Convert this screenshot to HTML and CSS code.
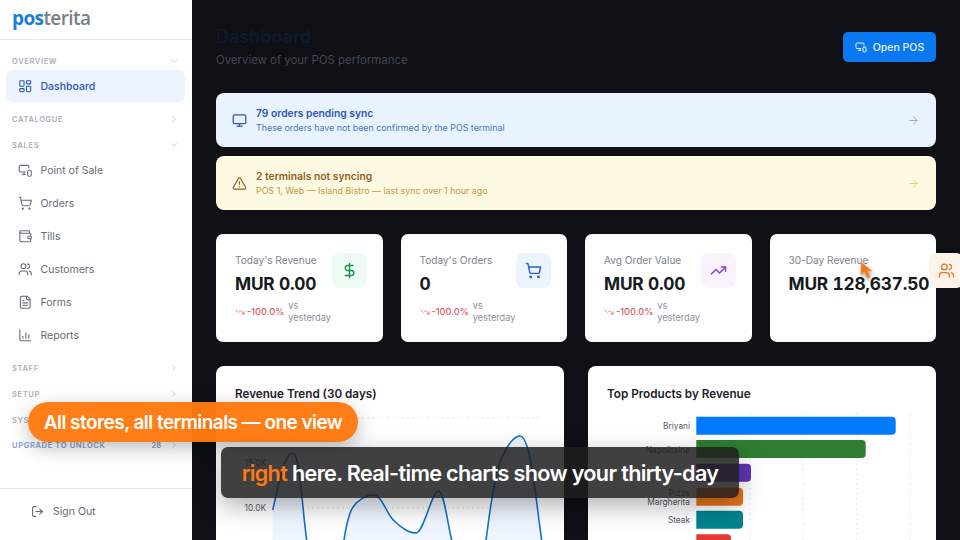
FILE: index.html
```html
<!DOCTYPE html>
<html lang="en">
<head>
  <meta charset="UTF-8">
  <title>Posterita Dashboard</title>
  <meta name="viewport" content="width=device-width,initial-scale=1">
  <link rel="stylesheet" href="styles.css">
</head>
<body>
  <svg class="sprite" width="0" height="0">
    <symbol id="i-dash" viewBox="0 0 24 24"><rect x="3" y="3" width="7" height="9" rx="1"/><rect x="14" y="3" width="7" height="5" rx="1"/><rect x="14" y="12" width="7" height="9" rx="1"/><rect x="3" y="16" width="7" height="5" rx="1"/></symbol>
    <symbol id="i-pos" viewBox="0 0 24 24"><path d="M18 8V6a2 2 0 0 0-2-2H4a2 2 0 0 0-2 2v7a2 2 0 0 0 2 2h8"/><path d="M10 19v-3.96 3.15"/><path d="M7 19h5"/><rect x="16" y="12" width="6" height="10" rx="2"/></symbol>
    <symbol id="i-cart" viewBox="0 0 24 24"><circle cx="8" cy="21" r="1"/><circle cx="19" cy="21" r="1"/><path d="M2.05 2.05h2l2.66 12.42a2 2 0 0 0 2 1.58h9.78a2 2 0 0 0 1.95-1.57l1.65-7.43H5.12"/></symbol>
    <symbol id="i-wallet" viewBox="0 0 24 24"><path d="M19 7V4a1 1 0 0 0-1-1H5a2 2 0 0 0 0 4h15a1 1 0 0 1 1 1v4h-3a2 2 0 0 0 0 4h3a1 1 0 0 0 1-1v-2a1 1 0 0 0-1-1"/><path d="M3 5v14a2 2 0 0 0 2 2h15a1 1 0 0 0 1-1v-4"/></symbol>
    <symbol id="i-users" viewBox="0 0 24 24"><path d="M16 21v-2a4 4 0 0 0-4-4H6a4 4 0 0 0-4 4v2"/><circle cx="9" cy="7" r="4"/><path d="M22 21v-2a4 4 0 0 0-3-3.87"/><path d="M16 3.13a4 4 0 0 1 0 7.75"/></symbol>
    <symbol id="i-file" viewBox="0 0 24 24"><path d="M15 2H6a2 2 0 0 0-2 2v16a2 2 0 0 0 2 2h12a2 2 0 0 0 2-2V7Z"/><path d="M14 2v4a2 2 0 0 0 2 2h4"/><path d="M10 9H8"/><path d="M16 13H8"/><path d="M16 17H8"/></symbol>
    <symbol id="i-chart" viewBox="0 0 24 24"><path d="M3 3v16a2 2 0 0 0 2 2h16"/><path d="M8 17v-3"/><path d="M13 17V8"/><path d="M18 17v-6"/></symbol>
    <symbol id="i-logout" viewBox="0 0 24 24"><path d="M9 21H5a2 2 0 0 1-2-2V5a2 2 0 0 1 2-2h4"/><path d="m16 17 5-5-5-5"/><path d="M21 12H9"/></symbol>
    <symbol id="i-monitor" viewBox="0 0 24 24"><rect x="2" y="3" width="20" height="14" rx="2"/><path d="M8 21h8"/><path d="M12 17v4"/></symbol>
    <symbol id="i-alert" viewBox="0 0 24 24"><path d="m21.73 18-8-14a2 2 0 0 0-3.48 0l-8 14A2 2 0 0 0 4 21h16a2 2 0 0 0 1.73-3"/><path d="M12 9v4"/><path d="M12 17h.01"/></symbol>
    <symbol id="i-arrow" viewBox="0 0 24 24"><path d="M5 12h14"/><path d="m12 5 7 7-7 7"/></symbol>
    <symbol id="i-dollar" viewBox="0 0 24 24"><path d="M12 2v20"/><path d="M17 5H9.5a3.5 3.5 0 0 0 0 7h5a3.5 3.5 0 0 1 0 7H6"/></symbol>
    <symbol id="i-up" viewBox="0 0 24 24"><path d="M22 7 13.5 15.5 8.5 10.5 2 17"/><path d="M16 7h6v6"/></symbol>
    <symbol id="i-down" viewBox="0 0 24 24"><path d="M22 17 13.5 8.5 8.5 13.5 2 7"/><path d="M16 17h6v-6"/></symbol>
    <symbol id="i-open" viewBox="0 0 24 24"><path d="m6 9 6 6 6-6"/></symbol>
    <symbol id="i-closed" viewBox="0 0 24 24"><path d="m9 18 6-6-6-6"/></symbol>
  </svg>

  <div class="page">
    <aside class="sidebar">
      <div class="logo"><span class="logo-pos">pos</span><span class="logo-rest">terita</span></div>
      <nav class="nav">
        <div class="nav-head"><span>OVERVIEW</span><svg class="chev"><use href="#i-open"/></svg></div>
        <a class="nav-item active"><svg class="ico"><use href="#i-dash"/></svg>Dashboard</a>
        <div class="nav-head gap"><span>CATALOGUE</span><svg class="chev"><use href="#i-closed"/></svg></div>
        <div class="nav-head gap"><span>SALES</span><svg class="chev"><use href="#i-open"/></svg></div>
        <a class="nav-item"><svg class="ico"><use href="#i-pos"/></svg>Point of Sale</a>
        <a class="nav-item"><svg class="ico"><use href="#i-cart"/></svg>Orders</a>
        <a class="nav-item"><svg class="ico"><use href="#i-wallet"/></svg>Tills</a>
        <a class="nav-item"><svg class="ico"><use href="#i-users"/></svg>Customers</a>
        <a class="nav-item"><svg class="ico"><use href="#i-file"/></svg>Forms</a>
        <a class="nav-item"><svg class="ico"><use href="#i-chart"/></svg>Reports</a>
        <div class="nav-head gap"><span>STAFF</span><svg class="chev"><use href="#i-closed"/></svg></div>
        <div class="nav-head gap"><span>SETUP</span><svg class="chev"><use href="#i-closed"/></svg></div>
        <div class="nav-head gap"><span>SYSTEM</span><svg class="chev"><use href="#i-closed"/></svg></div>
        <div class="nav-head gap upgrade"><span>UPGRADE TO UNLOCK</span><b class="count">28</b><svg class="chev"><use href="#i-closed"/></svg></div>
      </nav>
      <div class="side-foot"><svg class="ico"><use href="#i-logout"/></svg>Sign Out</div>
    </aside>

    <main class="main">
      <header class="top">
        <div>
          <h1>Dashboard</h1>
          <p>Overview of your POS performance</p>
        </div>
        <button class="open-pos"><svg class="ico"><use href="#i-pos"/></svg>Open POS</button>
      </header>

      <div class="banner blue">
        <svg class="ico"><use href="#i-monitor"/></svg>
        <div class="banner-text">
          <strong>79 orders pending sync</strong>
          <span>These orders have not been confirmed by the POS terminal</span>
        </div>
        <svg class="ico arrow"><use href="#i-arrow"/></svg>
      </div>
      <div class="banner yellow">
        <svg class="ico"><use href="#i-alert"/></svg>
        <div class="banner-text">
          <strong>2 terminals not syncing</strong>
          <span>POS 1, Web — Island Bistro — last sync over 1 hour ago</span>
        </div>
        <svg class="ico arrow"><use href="#i-arrow"/></svg>
      </div>

      <section class="stats">
        <div class="stat">
          <div class="stat-text">
            <div class="stat-label">Today's Revenue</div>
            <div class="stat-value">MUR 0.00</div>
            <div class="trend"><svg class="ico"><use href="#i-down"/></svg><b>-100.0%</b><span>vs yesterday</span></div>
          </div>
          <div class="stat-icon green"><svg class="ico"><use href="#i-dollar"/></svg></div>
        </div>
        <div class="stat">
          <div class="stat-text">
            <div class="stat-label">Today's Orders</div>
            <div class="stat-value">0</div>
            <div class="trend"><svg class="ico"><use href="#i-down"/></svg><b>-100.0%</b><span>vs yesterday</span></div>
          </div>
          <div class="stat-icon sky"><svg class="ico"><use href="#i-cart"/></svg></div>
        </div>
        <div class="stat">
          <div class="stat-text">
            <div class="stat-label">Avg Order Value</div>
            <div class="stat-value">MUR 0.00</div>
            <div class="trend"><svg class="ico"><use href="#i-down"/></svg><b>-100.0%</b><span>vs yesterday</span></div>
          </div>
          <div class="stat-icon violet"><svg class="ico"><use href="#i-up"/></svg></div>
        </div>
        <div class="stat">
          <div class="stat-text">
            <div class="stat-label">30-Day Revenue</div>
            <div class="stat-value">MUR 128,637.50</div>
          </div>
          <div class="stat-icon peach"><svg class="ico"><use href="#i-users"/></svg></div>
        </div>
      </section>

      <section class="charts">
        <div class="chart-card">
          <h3>Revenue Trend (30 days)</h3>
          <svg class="plot" viewBox="0 0 348 160">
            <g class="grid">
              <path d="M56 15H324"/><path d="M56 60H324"/><path d="M56 105H324"/>
            </g>
            <g class="axis">
              <text x="50" y="63">15.0K</text>
              <text x="50" y="108">10.0K</text>
            </g>
            <path class="area" d="M56.7 107C62 85 68 50 76.7 50C84 50 86 105 90.7 137C94 165 118 190 128 137C131 118 134 108 137.3 103.7C142 97 150 92 157.3 92C166 92 170 110 177.3 117C184 124 194 131 200.7 129.7C208 128 216 88 222.3 88C228 88 231 118 235.7 137C241 165 262 185 270 137C273 115 276 90 280.7 70C286 50 296 33 304 33C315 33 320 100 325.7 137L328 160H56.7Z"/>
            <path class="line" d="M56.7 107C62 85 68 50 76.7 50C84 50 86 105 90.7 137C94 165 118 190 128 137C131 118 134 108 137.3 103.7C142 97 150 92 157.3 92C166 92 170 110 177.3 117C184 124 194 131 200.7 129.7C208 128 216 88 222.3 88C228 88 231 118 235.7 137C241 165 262 185 270 137C273 115 276 90 280.7 70C286 50 296 33 304 33C315 33 320 100 325.7 137L328 160"/>
          </svg>
        </div>
        <div class="chart-card">
          <h3>Top Products by Revenue</h3>
          <svg class="plot" viewBox="0 0 348 160">
            <g class="grid">
              <path d="M162 10V160"/><path d="M215 10V160"/><path d="M268.700 10V160"/><path d="M322 10V160"/>
            </g>
            <path fill="#007aff" d="M108.300 13.700H303.700a4 4 0 0 1 4 4V27.700a4 4 0 0 1-4 4H108.300Z"/>
            <path fill="#2e7d32" d="M108.300 37H273.700a4 4 0 0 1 4 4V51a4 4 0 0 1-4 4H108.300Z"/>
            <path fill="#5e35b1" d="M108.300 60.700H159a4 4 0 0 1 4 4V74.700a4 4 0 0 1-4 4H108.300Z"/>
            <path fill="#e8741a" d="M108.300 84.700H151a4 4 0 0 1 4 4V98.700a4 4 0 0 1-4 4H108.300Z"/>
            <path fill="#00838f" d="M108.300 107.700H151a4 4 0 0 1 4 4V121.700a4 4 0 0 1-4 4H108.300Z"/>
            <path fill="#e53935" d="M108.300 131.300H139a4 4 0 0 1 4 4V160H108.300Z"/>
            <g class="axis">
              <text x="102" y="26">Briyani</text>
              <text x="102" y="49.500">Napolitaine</text>
              <text x="102" y="93">Pizza</text>
              <text x="102" y="101.500">Margherita</text>
              <text x="102" y="120">Steak</text>
            </g>
          </svg>
        </div>
      </section>
    </main>

    <!-- video overlays -->
    <div class="pill">All stores, all terminals — one view</div>
    <div class="caption"><em>right</em> here. Real-time charts show your thirty-day</div>
    <svg class="cursor" viewBox="0 0 14 20" width="14" height="20"><path d="M1 1 L1 14 L4.500 11 L7.500 17.500 L10 16 L7.500 10 L12 10 Z"/></svg>
  </div>
</body>
</html>
```

FILE: styles.css
```css
* { box-sizing: border-box; }
html, body { margin: 0; padding: 0; width: 960px; height: 540px; overflow: hidden; }
body { font-family: Inter, "Noto Sans", sans-serif; background: #0e1015; }
.sprite { position: absolute; }
.ico { width: 15px; height: 15px; fill: none; stroke: currentColor; stroke-width: 2; stroke-linecap: round; stroke-linejoin: round; flex: none; }

.page { position: relative; display: flex; width: 960px; height: 540px; overflow: hidden; }

/* sidebar */
.sidebar { width: 192px; height: 540px; background: #fefefe; display: flex; flex-direction: column; flex: none; }
.logo { height: 40px; padding: 2px 0 0 12px; border-bottom: 1px solid #e6e8ec; font-family: "Open Sans", sans-serif; font-size: 19px; line-height: 33px; letter-spacing: -.6px; }
.logo-pos { color: #1a7fd6; font-weight: 700; }
.logo-rest { color: #7a8088; font-weight: 600; }
.nav { padding-top: 12px; flex: 1; }
.nav-head { height: 18px; padding: 0 12px; display: flex; align-items: center; justify-content: space-between; font-size: 7.5px; font-weight: 600; letter-spacing: .65px; color: #a9aeb7; }
.nav-head.gap { margin-top: 8px; }
.nav-head.upgrade { margin-top: 7px; color: #7c9dd0; }
.chev { width: 10px; height: 10px; fill: none; stroke: #c3c7ce; stroke-width: 2; stroke-linecap: round; stroke-linejoin: round; margin-right: 1px; }
.upgrade span { flex: 1; }
.count { font-size: 7.5px; font-weight: 600; letter-spacing: 0; margin-right: 8px; }
.nav-item { display: flex; align-items: center; gap: 8px; height: 32px; margin: 0 7px 1px 6px; padding-left: 12px; border-radius: 7px; font-size: 10.5px; color: #666c77; }
.nav-item .ico { width: 14.500px; height: 14.500px; stroke-width: 1.800; }
.nav-item.active { background: #ebf3fd; color: #2f55b5; font-weight: 500; margin-bottom: 0; }
.side-foot { height: 52px; border-top: 1px solid #e6e8ec; display: flex; align-items: center; gap: 9px; padding: 0 0 6px 31px; font-size: 10.5px; color: #666c77; }
.side-foot .ico { width: 13px; height: 13px; }

/* main */
.main { flex: 1; padding: 24px 24px 0; min-width: 0; }
.top { display: flex; justify-content: space-between; align-items: flex-start; height: 46px; }
.top h1 { margin: 1px 0 0; font-size: 18px; line-height: 24px; font-weight: 600; color: #0e1a2c; }
.top p { margin: 3px 0 0; font-size: 11.4px; line-height: 16px; color: #404856; }
.open-pos { margin-top: 8px; width: 93px; height: 30px; background: #0a78f0; color: #e8f2ff; border: none; border-radius: 5px; font: 500 10.500px Inter, sans-serif; display: flex; align-items: center; justify-content: center; gap: 6px; }
.open-pos .ico { width: 12px; height: 12px; }

.banner { height: 54px; margin-top: 9px; border-radius: 8px; padding: 0 16px 0 16px; display: flex; align-items: center; gap: 9px; }
.top + .banner { margin-top: 23px; }
.banner-text { flex: 1; display: flex; flex-direction: column; gap: 2px; }
.banner-text strong { font-size: 10.300px; line-height: 14px; font-weight: 600; }
.banner-text span { font-size: 8.900px; line-height: 12px; }
.banner .arrow { width: 13px; height: 13px; stroke-width: 1.800; }
.blue { background: #e9f3fe; color: #2f55b5; }
.blue span { color: #4a74c4; }
.blue .arrow { color: #8fb0d8; }
.yellow { background: #fef9e3; color: #96601c; }
.yellow span { color: #c49a3a; }
.yellow .arrow { color: #ecd24f; }

.stats { display: grid; grid-template-columns: repeat(4, 166.500px); gap: 18px; margin-top: 24px; }
.stat { height: 108px; background: #fefefe; border-radius: 7px; padding: 19px 16px 0 19px; display: flex; align-items: flex-start; }
.stat-text { flex: 1; }
.stat-label { font-size: 10.100px; line-height: 14px; color: #7d848f; }
.stat-value { margin-top: 6px; font-size: 17.300px; line-height: 22px; font-weight: 700; font-variant-numeric: tabular-nums; letter-spacing: -.2px; color: #161a21; white-space: nowrap; }
.trend { display: flex; align-items: center; margin-top: 5px; font-size: 9.200px; line-height: 12px; color: #8a919c; }
.trend .ico { width: 10px; height: 10px; color: #e2737a; margin-right: 2px; }
.trend b { font-weight: 500; color: #d9616a; white-space: nowrap; margin-right: 4px; }
.trend span { min-width: 0; }
.stat-icon { width: 35px; height: 35px; border-radius: 8px; display: flex; align-items: center; justify-content: center; flex: none; }
.stat-icon .ico { width: 17px; height: 17px; }
.green { background: #eefaf2; color: #1f9254; }
.sky { background: #ebf3fd; color: #2f60c4; }
.violet { background: #f8f3fd; color: #8a3fd6; }
.peach { background: #fdf3e8; color: #dd7d2c; }

.charts { display: grid; grid-template-columns: 348px 348px; gap: 24px; margin-top: 24px; }
.chart-card { height: 220px; background: #fefefe; border-radius: 8px; padding-top: 19px; }
.chart-card h3 { margin: 0; padding-left: 19px; font-size: 11.700px; line-height: 18px; font-weight: 600; color: #1c2028; }
.plot { display: block; width: 348px; height: 160px; }
.grid path { stroke: #e5e7eb; stroke-width: 1; stroke-dasharray: 2 3; fill: none; }
.axis text { font-size: 8.300px; fill: #555b65; text-anchor: end; font-family: Inter, sans-serif; }
.area { fill: #e8f2fd; opacity: .75; }
.line { fill: none; stroke: #1272cf; stroke-width: 1.600; }

/* overlays */
.pill { position: absolute; left: 28px; top: 402px; width: 330px; height: 40px; border-radius: 20px; background: rgba(255, 122, 15, .97); color: #fff; font-size: 19px; line-height: 41px; font-weight: 600; letter-spacing: -.55px; text-align: center; box-shadow: 0 6px 18px rgba(0, 0, 0, .25); white-space: nowrap; }
.caption { position: absolute; left: 221px; top: 447px; width: 518px; height: 51px; border-radius: 7px; background: rgba(30, 30, 30, .85); color: #fff; font-size: 21.600px; line-height: 52px; font-weight: 600; letter-spacing: -.65px; text-align: center; box-shadow: 0 8px 24px rgba(0, 0, 0, .3); white-space: nowrap; }
.caption em { font-style: normal; color: #ff7a10; }
.cursor { position: absolute; left: 860px; top: 261px; filter: drop-shadow(1px 2px 2px rgba(0, 0, 0, .35)); }
.cursor path { fill: #ee7a1c; stroke: #f7a868; stroke-width: .6; }
```
